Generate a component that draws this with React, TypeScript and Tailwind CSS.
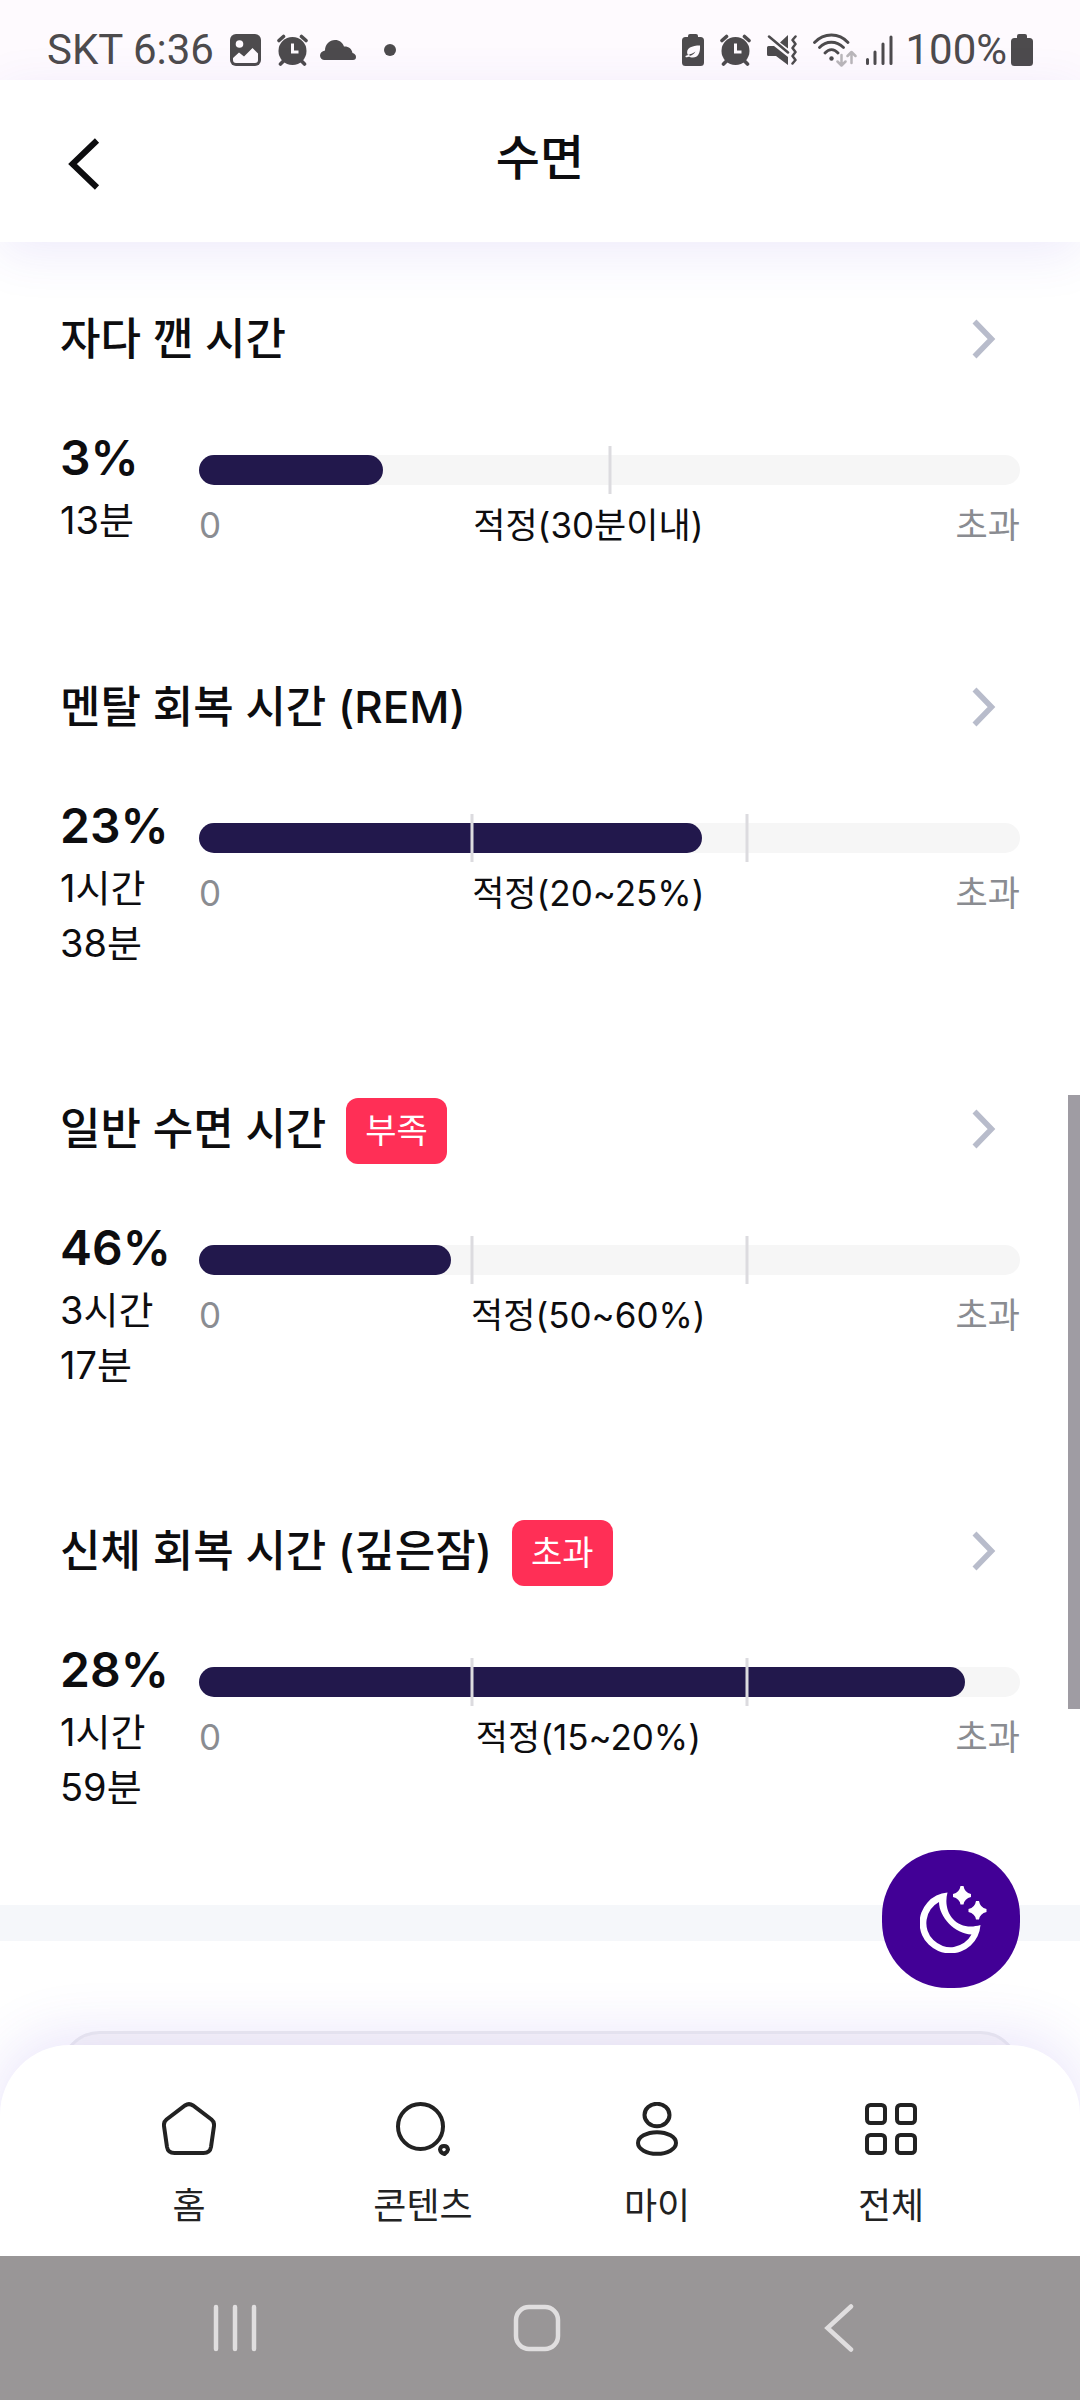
import type { ReactNode } from 'react';

interface SleepMetric {
  title: string;
  badge?: string;
  percent: number;
  duration: string[];
  fill: number;
  marks: number[];
  range: string;
}

const metrics: SleepMetric[] = [
  { title: '자다 깬 시간', percent: 3, duration: ['13분'], fill: 22.4, marks: [50], range: '적정(30분이내)' },
  {
    title: '멘탈 회복 시간 (REM)',
    percent: 23,
    duration: ['1시간', '38분'],
    fill: 61.3,
    marks: [33.3, 66.7],
    range: '적정(20~25%)',
  },
  {
    title: '일반 수면 시간',
    badge: '부족',
    percent: 46,
    duration: ['3시간', '17분'],
    fill: 30.7,
    marks: [33.3, 66.7],
    range: '적정(50~60%)',
  },
  {
    title: '신체 회복 시간 (깊은잠)',
    badge: '초과',
    percent: 28,
    duration: ['1시간', '59분'],
    fill: 93.3,
    marks: [33.3, 66.7],
    range: '적정(15~20%)',
  },
];

function AlarmIcon() {
  return (
    <svg width="31" height="32" viewBox="0 0 31 32" fill="none">
      <circle cx="15.5" cy="17" r="14" fill="#4d4b4d" />
      <path d="M2 6.5 6.5 2.5M29 6.5 24.5 2.5M6 27.5 3.5 30M25 27.5 27.5 30" stroke="#4d4b4d" strokeWidth="3.6" strokeLinecap="round" />
      <path d="M15.5 9.5v8.5h6" stroke="#fefafe" strokeWidth="3" />
    </svg>
  );
}

function StatusBar() {
  return (
    <div className="flex h-20 shrink-0 items-center justify-between bg-[#fefafe] pt-5 pr-[47px] pl-[47px] text-[42px] leading-[48px] text-[#4d4b4d]">
      <div className="flex items-center">
        <span className="font-['Roboto',sans-serif]">SKT 6:36</span>
        <svg className="ml-4" width="31" height="32" viewBox="0 0 31 32">
          <rect width="31" height="32" rx="6" fill="#4d4b4d" />
          <circle cx="9.5" cy="10" r="3.8" fill="#fefafe" />
          <path d="M3 24 9 18.5 14 22.5 22.5 14 28 19.5V26a3 3 0 0 1-3 3H6a3 3 0 0 1-3-3Z" fill="#fefafe" />
        </svg>
        <div className="ml-4">
          <AlarmIcon />
        </div>
        <svg className="ml-3" width="36" height="20" viewBox="0 0 36 20" fill="#4d4b4d">
          <path d="M4.5 20A4.5 4.5 0 0 1 0 15.5C0 13 2 11 5 10.5 5 4.5 9.5 0 15 0c4.5 0 7.5 2.5 9 6.5 4.5-.3 8 2.5 8.5 6.5 2 .5 3.5 2 3.5 4a3 3 0 0 1-3 3Z" />
        </svg>
        <span className="ml-7 size-3 rounded-full bg-[#4d4b4d]" />
      </div>

      <div className="flex items-center">
        <svg width="22" height="32" viewBox="0 0 22 32">
          <path d="M6 3V2a2 2 0 0 1 2-2h6a2 2 0 0 1 2 2v1h2.5A3.5 3.5 0 0 1 22 6.5v22a3.5 3.5 0 0 1-3.5 3.5h-15A3.5 3.5 0 0 1 0 28.5v-22A3.5 3.5 0 0 1 3.5 3Z" fill="#4d4b4d" />
          <path d="M18 11.5c.5 7.5-2 12-7 12-2 0-3.5-.5-4-1.5 3-.5 5-2 6.500-4.500-2.500 2-5 3-8 3C3.500 14 10 11.500 18 11.500ZM3.500 22c1.500-.5 2.500-1 4-2.500v3c-1.500.8-3 1-4 .5Z" fill="#fefafe" />
        </svg>
        <div className="ml-4">
          <AlarmIcon />
        </div>
        <svg className="ml-4" width="30" height="30" viewBox="0 0 30 30" fill="none">
          <path d="M0 12.5Q0 11 1.5 11H7L21 22v8L9 21H1.5Q0 21 0 19.5ZM13 7.5 21 0v13.5Z" fill="#4d4b4d" />
          <path d="M2 1.5 21 17.5" stroke="#4d4b4d" strokeWidth="2.5" strokeLinecap="round" />
          <path d="M28.5 1.5 25.5 5l3 4-3 4 3 4-3 4 3 4-3 3.5" stroke="#4d4b4d" strokeWidth="2.5" strokeLinecap="round" strokeLinejoin="round" />
        </svg>
        <svg className="ml-4" width="44" height="34" viewBox="0 0 44 34" fill="none">
          <path d="M1.5 9.5C11-.5 26-.5 35 9.5M6.5 14.5c6.5-7 17-7 24 0M12 20c4-4.5 9-4.5 13 0" stroke="#4d4b4d" strokeWidth="2.8" strokeLinecap="round" />
          <circle cx="18.5" cy="25.5" r="2.2" fill="#4d4b4d" />
          <path d="M28.5 22v10M24.5 28.5l4 4 4-4M38.5 30V19M34.5 23l4-4 4 4" stroke="#b9b6b9" strokeWidth="2.5" strokeLinecap="round" strokeLinejoin="round" />
        </svg>
        <svg className="ml-2" width="28" height="30" viewBox="0 0 28 30" stroke="#4d4b4d" strokeWidth="3" strokeLinecap="round">
          <path d="M2.5 24.5v4M10 17v11.5M18 9v19.5M26 2v26.5" />
        </svg>
        <span className="ml-3 font-['Roboto',sans-serif]">100%</span>
        <svg className="ml-1" width="22" height="32" viewBox="0 0 22 32" fill="#4d4b4d">
          <path d="M6 4V2a2 2 0 0 1 2-2h6a2 2 0 0 1 2 2v2h2.5A3.5 3.5 0 0 1 22 7.5v21a3.5 3.5 0 0 1-3.5 3.5h-15A3.5 3.5 0 0 1 0 28.5v-21A3.5 3.5 0 0 1 3.5 4Z" />
        </svg>
      </div>
    </div>
  );
}

function MetricSection({ metric }: { metric: SleepMetric }) {
  const { title, badge, percent, duration, fill, marks, range } = metric;
  return (
    <section>
      <div className="flex h-[66px] items-center">
        <h2 className="pb-1 text-[44px] leading-[56px] font-medium">{title}</h2>
        {badge && (
          <span className="ml-5 flex h-[66px] items-center rounded-xl bg-[#ff2f56] px-[19px] text-[34px] leading-[48px] text-white">
            {badge}
          </span>
        )}
        <button type="button" aria-label={`${title} 상세`} className="mr-6 ml-auto pb-1">
          <svg width="24" height="40" viewBox="0 0 24 40" fill="none">
            <path d="M2.5 2.5 19.5 20 2.5 37.5" stroke="#b8bccb" strokeWidth="5.5" />
          </svg>
        </button>
      </div>

      <div className="mt-[52px] flex">
        <div className="w-[139px] shrink-0">
          <p className="text-[48px] leading-[64px] font-semibold">{percent}%</p>
          <p className="mt-[3px] text-[38px] leading-[55px]">
            {duration.map((line) => (
              <span key={line} className="block">
                {line}
              </span>
            ))}
          </p>
        </div>
        <div className="flex-1 pt-5">
          <div className="relative flex h-12 items-center">
            <div className="h-[30px] w-full rounded-full bg-[#f6f6f6]">
              <div className="h-full rounded-full bg-[#22184c]" style={{ width: `${fill}%` }} />
            </div>
            {marks.map((mark) => (
              <span
                key={mark}
                className="absolute top-0 h-full w-[3px] -translate-x-1/2 bg-[#dcdbdf]"
                style={{ left: `${mark}%` }}
              />
            ))}
          </div>
          <div className="mt-[7px] flex justify-between text-[35px] leading-[48px] text-[#8a8c91]">
            <span>0</span>
            <span className="text-[#0d0d0f]">{range}</span>
            <span>초과</span>
          </div>
        </div>
      </div>
    </section>
  );
}

const tabs: { label: string; icon: ReactNode }[] = [
  {
    label: '홈',
    icon: (
      <svg width="54" height="54" viewBox="0 0 54 54">
        <path d="M23 3.5Q27 .8 31 3.5L49.5 17.5Q52.5 20 52 24L49 45Q48 51 41.5 51H12.5Q6 51 5 45L2 24Q1.5 20 4.5 17.5Z" />
      </svg>
    ),
  },
  {
    label: '콘텐츠',
    icon: (
      <svg width="54" height="54" viewBox="0 0 54 54">
        <circle cx="24.5" cy="24.5" r="22.5" />
        <path d="M44 47.5Q44.5 44 48 44T52 47.5Q51.5 50 48.5 52 44.5 51 44 47.5Z" />
      </svg>
    ),
  },
  {
    label: '마이',
    icon: (
      <svg width="42" height="54" viewBox="0 0 42 54">
        <ellipse cx="21" cy="13" rx="12.5" ry="11.2" />
        <ellipse cx="21" cy="41" rx="19" ry="10.8" />
      </svg>
    ),
  },
  {
    label: '전체',
    icon: (
      <svg width="52" height="54" viewBox="0 0 52 54">
        <rect x="2" y="3" width="18" height="18" rx="3.5" />
        <rect x="32" y="3" width="18" height="18" rx="3.5" />
        <rect x="2" y="33" width="18" height="18" rx="3.5" />
        <rect x="32" y="33" width="18" height="18" rx="3.5" />
      </svg>
    ),
  },
];

export default function App() {
  return (
    <div className="flex h-screen flex-col bg-white font-['Inter','Noto_Sans_CJK_KR',sans-serif] text-[#0d0d0f]">
      <StatusBar />

      <header className="relative z-10 flex h-[162px] shrink-0 items-center justify-between bg-white px-[60px] shadow-[0_12px_48px_rgba(90,60,220,0.1)]">
        <button type="button" aria-label="뒤로" className="w-12 pt-1.5 pl-2">
          <svg width="32" height="52" viewBox="0 0 32 52" fill="none">
            <path d="M29 2.5 4.5 26 29 49.5" stroke="#0d0d0f" strokeWidth="6" />
          </svg>
        </button>
        <h1 className="pb-1.5 text-[48px] leading-[64px] font-medium">수면</h1>
        <span className="w-12" />
      </header>

      <div className="relative min-h-0 flex-1">
        <main className="h-full overflow-hidden">
          <div className="flex flex-col gap-[127px] px-[60px] pt-[66px] pb-[90px]">
            {metrics.map((metric) => (
              <MetricSection key={metric.title} metric={metric} />
            ))}
          </div>
          <div className="h-9 bg-[#f5f7fa]" />
          <div className="px-[60px] pt-[90px]">
            <div className="h-40 rounded-[40px] border-3 border-[#ededf0] bg-[#f9f8f9]" />
          </div>
        </main>
        <span className="absolute top-[853px] right-0 h-[614px] w-3 bg-[#9f9ca3]" />
        <button
          type="button"
          aria-label="수면 기록"
          className="absolute right-[60px] bottom-[57px] z-20 flex size-[138px] items-center justify-center rounded-[66px] bg-[#420096]"
        >
          <svg className="ml-1" width="67" height="67" viewBox="0 0 67 67" fill="#ffffff">
            <path
              fillRule="evenodd"
              d="M27.5 6.5C22 27 37 46 60.5 39A30.5 30.5 0 1 1 27.5 6.5ZM19 16A24 24 0 1 0 51.5 48.5C35 48 19 31 19 16Z"
            />
            <path d="M40.5 0h3q1 6.5 7.5 8v3q-6.5 1.5-7.5 7.5h-3Q39.5 12.5 33 11V8q6.5-1.5 7.5-8ZM56 15h3q1 6.500 7.500 8v3Q60 27.500 59 33.500h-3Q55 27.500 48.500 26v-3Q55 21.500 56 15Z" />
          </svg>
        </button>
      </div>

      <nav className="relative z-10 h-[211px] shrink-0 rounded-t-[70px] bg-white px-[72px] pt-[57px] shadow-[0_-8px_60px_rgba(90,60,220,0.14)]">
        <ul className="grid grid-cols-4">
          {tabs.map((tab) => (
            <li key={tab.label}>
              <a href="#" className="flex flex-col items-center gap-[26px] text-[36px] leading-[48px] text-[#222222]">
                <span className="h-[54px] fill-none stroke-[#222222] stroke-4">{tab.icon}</span>
                {tab.label}
              </a>
            </li>
          ))}
        </ul>
      </nav>

      <div className="relative z-10 grid h-36 shrink-0 grid-cols-3 place-items-center bg-[#999697] pr-[90px] pl-[84px]">
        <button type="button" aria-label="최근 앱">
          <svg width="46" height="48" viewBox="0 0 46 48" stroke="#e0dedf" strokeWidth="4.5" strokeLinecap="round">
            <path d="M4 3v42M23 3v42M42 3v42" />
          </svg>
        </button>
        <button type="button" aria-label="홈 화면">
          <svg width="48" height="48" viewBox="0 0 48 48" fill="none" stroke="#e0dedf" strokeWidth="4.5">
            <rect x="3" y="3" width="42" height="42" rx="13" />
          </svg>
        </button>
        <button type="button" aria-label="이전">
          <svg width="30" height="48" viewBox="0 0 30 48" fill="none" stroke="#e0dedf" strokeWidth="4.5" strokeLinecap="round">
            <path d="M27 2.5 3.5 24 27 45.5" />
          </svg>
        </button>
      </div>
    </div>
  );
}
